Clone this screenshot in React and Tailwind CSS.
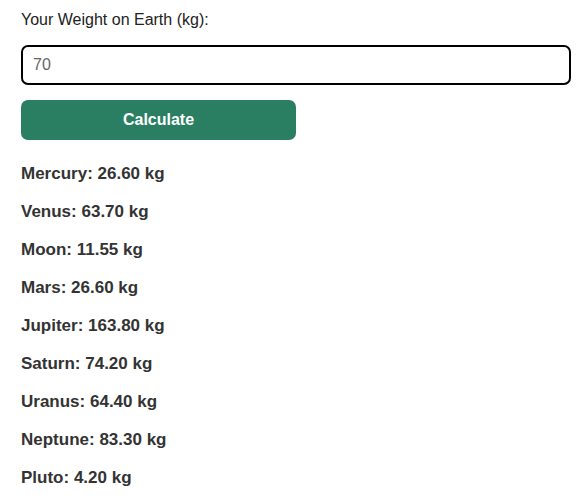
import React, { useState } from "react";

const gravity = [
  { name: "Mercury", factor: 0.38 },
  { name: "Venus", factor: 0.91 },
  { name: "Moon", factor: 0.165 },
  { name: "Mars", factor: 0.38 },
  { name: "Jupiter", factor: 2.34 },
  { name: "Saturn", factor: 1.06 },
  { name: "Uranus", factor: 0.92 },
  { name: "Neptune", factor: 1.19 },
  { name: "Pluto", factor: 0.06 },
];

const App = () => {
  const [weight, setWeight] = useState("70");
  const [results, setResults] = useState(
    gravity.map((p) => ({ name: p.name, value: (70 * p.factor).toFixed(2) }))
  );

  const calculate = () => {
    const w = parseFloat(weight) || 0;
    setResults(gravity.map((p) => ({ name: p.name, value: (w * p.factor).toFixed(2) })));
  };

  return (
    <div className="min-h-screen bg-white px-[21px] pt-[8px] font-['Liberation_Sans',Arial,sans-serif] text-[16px] text-[#222]">
      <label className="block leading-[24px]">Your Weight on Earth (kg):</label>

      {/* Input */}
      <input
        type="text"
        value={weight}
        onChange={(e) => setWeight(e.target.value)}
        className="mt-[13px] block h-[40px] w-[550px] rounded-[7px] border-2 border-black px-[10px] text-[16px] text-[#666] focus:outline-none"
      />

      <button
        onClick={calculate}
        className="mt-[15px] block h-[40px] w-[275px] rounded-[7px] bg-[#2a7f62] text-[16px] font-bold text-white"
      >
        Calculate
      </button>

      {/* Results */}
      <div className="mt-[24px] flex flex-col gap-[19px]">
        {results.map((r) => (
          <p key={r.name} className="text-[17px] leading-[19px] font-bold text-[#333]">
            {r.name}: {r.value} kg
          </p>
        ))}
      </div>
    </div>
  );
};

export default App;
